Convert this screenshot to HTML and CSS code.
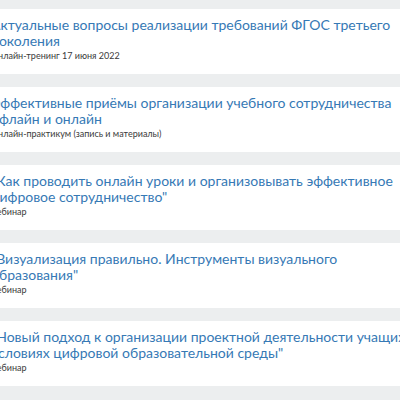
FILE: index.html
```html
<!DOCTYPE html>
<html lang="ru">
<head>
    <meta charset="UTF-8">
    <meta name="viewport" content="width=device-width, initial-scale=1.0">
    <title>Мероприятия</title>
    <link rel="stylesheet" href="styles.css">
</head>
<body>
    <div class="events">
        <div class="event">
            <a class="event-title" href="#">Актуальные вопросы реализации требований ФГОС третьего поколения</a>
            <div class="event-type">Онлайн-тренинг 17 июня 2022</div>
        </div>
        <div class="event">
            <a class="event-title" href="#">Эффективные приёмы организации учебного сотрудничества офлайн и онлайн</a>
            <div class="event-type">Онлайн-практикум (запись и материалы)</div>
        </div>
        <div class="event">
            <a class="event-title" href="#">"Как проводить онлайн уроки и организовывать эффективное цифровое сотрудничество"</a>
            <div class="event-type">Вебинар</div>
        </div>
        <div class="event">
            <a class="event-title" href="#">"Визуализация правильно. Инструменты визуального<br>образования"</a>
            <div class="event-type">Вебинар</div>
        </div>
        <div class="event">
            <a class="event-title" href="#">"Новый подход к организации проектной деятельности учащихся в условиях цифровой образовательной среды"</a>
            <div class="event-type">Вебинар</div>
        </div>
    </div>
</body>
</html>
```

FILE: styles.css
```css
body {
    margin: 0;
    background-color: #eceeef;
    font-family: Lato, Arial, sans-serif;
    overflow: hidden;
}
.events {
    display: flex;
    flex-direction: column;
    gap: 13px;
    padding-top: 9px;
    margin-left: -9px;
    width: 450px;
}
.event {
    background: #fff;
    height: 65px;
    box-sizing: border-box;
    padding-top: 8px;
}
.event-title {
    display: block;
    font-size: 14px;
    line-height: 16px;
    color: #3679b5;
    text-decoration: none;
}
.event-type {
    margin-top: 1px;
    font-size: 9px;
    line-height: 11px;
    color: #3a3a3a;
}
```
